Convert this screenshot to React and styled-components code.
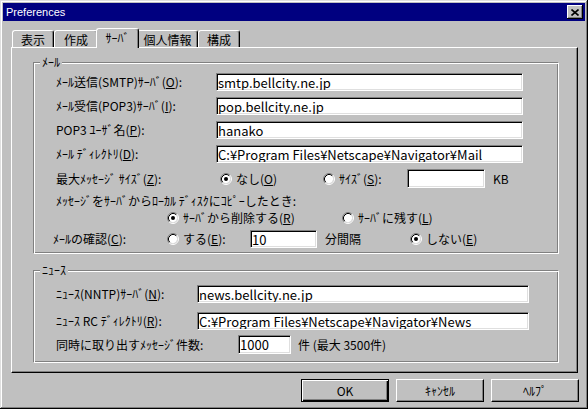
import React from "react";
import styled, { createGlobalStyle } from "styled-components";

const GlobalStyle = createGlobalStyle`
  * { box-sizing: border-box; }
  body {
    margin: 0;
    background: #c0c0c0;
    color: #000;
    font-family: "Noto Sans CJK JP", "Noto Sans", sans-serif;
    font-size: 12px;
  }
`;

const Window = styled.div`
  width: 588px;
  height: 409px;
  padding: 3px;
  background: #c0c0c0;
  display: flex;
  flex-direction: column;
  box-shadow: inset -1px -1px #000, inset 1px 1px #dfdfdf,
    inset -2px -2px #808080, inset 2px 2px #fff;
`;

const TitleBar = styled.div`
  height: 18px;
  flex: none;
  display: flex;
  align-items: center;
  justify-content: space-between;
  padding: 0 2px 0 3px;
  background: #000080;
  color: #fff;
  font-family: "Liberation Sans", Arial, sans-serif;
  font-size: 11px;
`;

const CloseButton = styled.div`
  width: 16px;
  height: 14px;
  display: flex;
  align-items: center;
  justify-content: center;
  background: #c0c0c0;
  box-shadow: inset -1px -1px #000, inset 1px 1px #fff, inset -2px -2px #808080;
`;

const Body = styled.div`
  flex: 1;
  display: flex;
  flex-direction: column;
  padding: 7px 7px 0 8px;
`;

const TabRow = styled.div`
  height: 20px;
  flex: none;
  display: flex;
  align-items: flex-end;
  padding-left: 1px;
  margin-bottom: -1px;
`;

const Tab = styled.div`
  width: ${(p) => p.$w}px;
  height: ${(p) => (p.$active ? 20 : 17)}px;
  margin: 0 ${(p) => (p.$active ? -2 : 0)}px ${(p) => (p.$active ? 0 : 1)}px
    ${(p) => (p.$active ? -2 : 0)}px;
  padding-bottom: ${(p) => (p.$active ? 2 : 0)}px;
  display: flex;
  align-items: center;
  justify-content: center;
  background: #c0c0c0;
  border: 1px solid;
  border-color: #fff #000 transparent #fff;
  border-bottom: 0;
  border-radius: 3px 3px 0 0;
  box-shadow: inset -1px 0 #808080;
  position: ${(p) => (p.$active ? "relative" : "static")};
  z-index: ${(p) => (p.$active ? 2 : "auto")};
`;

const Panel = styled.div`
  height: 326px;
  flex: none;
  display: flex;
  flex-direction: column;
  padding: 14px 18px 0 21px;
  border: 1px solid;
  border-color: #fff #000 #000 #fff;
  box-shadow: inset -1px -1px #808080;
`;

const Group = styled.div`
  display: flex;
  flex-direction: column;
  margin-top: ${(p) => p.$mt || 0}px;
  padding: 0 0 ${(p) => p.$pb}px 22px;
  border: 1px solid;
  border-color: #808080 #fff #fff #808080;
  box-shadow: inset 1px 1px #fff, inset -1px -1px #808080;
`;

const Legend = styled.span`
  align-self: flex-start;
  height: 14px;
  line-height: 14px;
  margin: -8px 0 0 -16px;
  padding: 0 2px;
  background: #c0c0c0;
`;

const Row = styled.div`
  height: ${(p) => p.$h}px;
  margin-top: ${(p) => p.$mt}px;
  padding-left: ${(p) => p.$indent || 0}px;
  flex: none;
  display: flex;
  align-items: center;
  line-height: 14px;
  white-space: nowrap;
`;

const Label = styled.span`
  width: ${(p) => p.$w}px;
  margin-left: ${(p) => p.$shift || 0}px;
  flex: none;
`;

const Text = styled.span`
  margin-left: ${(p) => p.$ml || 0}px;
  width: ${(p) => (p.$w ? `${p.$w}px` : "auto")};
  flex: none;
`;

const Field = styled.input`
  width: ${(p) => p.$w}px;
  height: ${(p) => p.$h || 18}px;
  flex: none;
  margin: 0;
  padding: 0 1px 0 1px;
  border: 1px solid;
  border-color: #808080 #fff #fff #808080;
  box-shadow: inset 1px 1px #000, inset -1px -1px #dfdfdf;
  background: #fff;
  color: #000;
  font-family: "Noto Sans CJK JP", "Noto Sans", sans-serif;
  font-size: 13px;
  outline: none;
`;

const Option = styled.span`
  width: ${(p) => (p.$w ? `${p.$w}px` : "auto")};
  flex: none;
  display: inline-flex;
  align-items: center;
  gap: 4px;
`;

const ButtonRow = styled.div`
  display: flex;
  justify-content: flex-end;
  gap: 7px;
  margin: 6px -1px 0 0;
`;

const Button = styled.div`
  width: 88px;
  height: 23px;
  display: flex;
  align-items: center;
  justify-content: center;
  background: #c0c0c0;
  border: 1px solid;
  border-color: ${(p) => (p.$default ? "#000" : "#fff #000 #000 #fff")};
  box-shadow: ${(p) =>
    p.$default
      ? "inset 1px 1px #fff, inset -1px -1px #000, inset -2px -2px #808080"
      : "inset -1px -1px #808080"};
`;

const Radio = ({ checked }) => (
  <svg width="12" height="12" viewBox="0 0 12 12">
    <circle cx="6" cy="6" r="4.2" fill="#fff" />
    <path d="M2.11 9.89A5.5 5.5 0 0 1 9.89 2.11" fill="none" stroke="#808080" />
    <path d="M9.89 2.11A5.5 5.5 0 0 1 2.11 9.89" fill="none" stroke="#fff" />
    <path d="M2.82 9.18A4.5 4.5 0 0 1 9.18 2.82" fill="none" stroke="#000" />
    <path d="M9.18 2.82A4.5 4.5 0 0 1 2.82 9.18" fill="none" stroke="#dfdfdf" />
    {checked && <circle cx="6" cy="6" r="2" fill="#000" />}
  </svg>
);

const RadioOption = ({ w, checked, children }) => (
  <Option $w={w}>
    <Radio checked={checked} />
    <span>{children}</span>
  </Option>
);

const tabs = [
  { t: "表示", w: 42 },
  { t: "作成", w: 44 },
  { t: "ｻｰﾊﾞ", w: 43, active: true },
  { t: "個人情報", w: 61 },
  { t: "構成", w: 42 },
];

export default function App() {
  return (
    <>
      <GlobalStyle />
      <Window>
        <TitleBar>
          <span>Preferences</span>
          <CloseButton>
            <svg width="8" height="7" viewBox="0 0 8 7">
              <path d="M0.5 0.5L7.5 6.5M7.5 0.5L0.5 6.5" stroke="#000" strokeWidth="1.6" />
            </svg>
          </CloseButton>
        </TitleBar>
        <Body>
          <TabRow>
            {tabs.map((tab) => (
              <Tab key={tab.t} $w={tab.w} $active={tab.active}>
                {tab.t}
              </Tab>
            ))}
          </TabRow>
          <Panel>
            <Group $pb={5}>
              <Legend>ﾒｰﾙ</Legend>
              <Row $h={18} $mt={4}>
                <Label $w={160}>ﾒｰﾙ送信(SMTP)ｻｰﾊﾞ(<u>O</u>):</Label>
                <Field $w={307} readOnly defaultValue="smtp.bellcity.ne.jp" />
              </Row>
              <Row $h={18} $mt={6}>
                <Label $w={160}>ﾒｰﾙ受信(POP3)ｻｰﾊﾞ(<u>I</u>):</Label>
                <Field $w={307} readOnly defaultValue="pop.bellcity.ne.jp" />
              </Row>
              <Row $h={18} $mt={6}>
                <Label $w={160}>POP3 ﾕｰｻﾞ名(<u>P</u>):</Label>
                <Field $w={307} readOnly defaultValue="hanako" />
              </Row>
              <Row $h={18} $mt={6}>
                <Label $w={160}>ﾒｰﾙ ﾃﾞｨﾚｸﾄﾘ(<u>D</u>):</Label>
                <Field
                  $w={307}
                  readOnly
                  defaultValue="C:¥Program Files¥Netscape¥Navigator¥Mail"
                />
              </Row>
              <Row $h={19} $mt={6}>
                <Label $w={164}>最大ﾒｯｾｰｼﾞ ｻｲｽﾞ(<u>Z</u>):</Label>
                <RadioOption w={103} checked>
                  なし(<u>O</u>)
                </RadioOption>
                <RadioOption w={84}>
                  ｻｲｽﾞ(<u>S</u>):
                </RadioOption>
                <Field $w={78} $h={19} readOnly defaultValue="" />
                <Text $ml={8}>KB</Text>
              </Row>
              <Row $h={14} $mt={6}>
                <Text>ﾒｯｾｰｼﾞをｻｰﾊﾞからﾛｰｶﾙ ﾃﾞｨｽｸにｺﾋﾟｰしたとき:</Text>
              </Row>
              <Row $h={14} $mt={3} $indent={111}>
                <RadioOption w={175} checked>
                  ｻｰﾊﾞから削除する(<u>R</u>)
                </RadioOption>
                <RadioOption>
                  ｻｰﾊﾞに残す(<u>L</u>)
                </RadioOption>
              </Row>
              <Row $h={18} $mt={5}>
                <Label $w={114} $shift={-3}>ﾒｰﾙの確認(<u>C</u>):</Label>
                <RadioOption w={83}>
                  する(<u>E</u>):
                </RadioOption>
                <Field $w={67} readOnly defaultValue="10" />
                <Text $ml={8} $w={85}>分間隔</Text>
                <RadioOption checked>
                  しない(<u>E</u>)
                </RadioOption>
              </Row>
            </Group>

            <Group $mt={16} $pb={8}>
              <Legend>ﾆｭｰｽ</Legend>
              <Row $h={18} $mt={8}>
                <Label $w={141}>ﾆｭｰｽ(NNTP)ｻｰﾊﾞ(<u>N</u>):</Label>
                <Field $w={332} readOnly defaultValue="news.bellcity.ne.jp" />
              </Row>
              <Row $h={18} $mt={9}>
                <Label $w={141}>ﾆｭｰｽ RC ﾃﾞｨﾚｸﾄﾘ(<u>R</u>):</Label>
                <Field
                  $w={332}
                  readOnly
                  defaultValue="C:¥Program Files¥Netscape¥Navigator¥News"
                />
              </Row>
              <Row $h={19} $mt={5}>
                <Label $w={182}>同時に取り出すﾒｯｾｰｼﾞ件数:</Label>
                <Field $w={53} $h={19} readOnly defaultValue="1000" />
                <Text $ml={7}>件 (最大 3500件)</Text>
              </Row>
            </Group>
          </Panel>
          <ButtonRow>
            <Button $default>OK</Button>
            <Button>ｷｬﾝｾﾙ</Button>
            <Button>ﾍﾙﾌﾟ</Button>
          </ButtonRow>
        </Body>
      </Window>
    </>
  );
}
